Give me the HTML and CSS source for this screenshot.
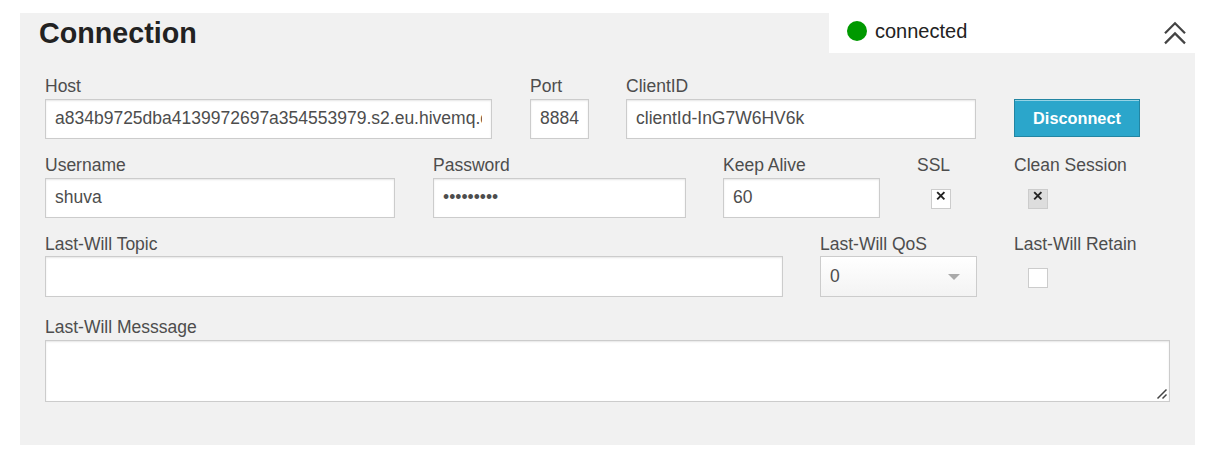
FILE: index.html
```html
<!DOCTYPE html>
<html lang="en">
<head>
<meta charset="utf-8">
<title>Connection</title>
<link rel="stylesheet" href="styles.css">
</head>
<body>
<section class="panel">
  <header class="header">
    <h3 class="title">Connection</h3>
    <div class="status">
      <span class="dot"></span>
      <span class="state">connected</span>
      <svg class="collapse" width="24" height="26" viewBox="0 0 24 26"><path d="M2 13.200 12 3.200l10 10M2 23.400 12 13.400l10 10"/></svg>
    </div>
  </header>
  <form class="form">
    <div class="row row-server">
      <div class="field"><label class="label">Host</label><div class="input"><span class="value">a834b9725dba4139972697a354553979.s2.eu.hivemq.cloud</span></div></div>
      <div class="field"><label class="label">Port</label><div class="input"><span class="value">8884</span></div></div>
      <div class="field"><label class="label">ClientID</label><div class="input"><span class="value">clientId-InG7W6HV6k</span></div></div>
      <button class="button" type="button">Disconnect</button>
    </div>
    <div class="row row-login">
      <div class="field"><label class="label">Username</label><div class="input"><span class="value">shuva</span></div></div>
      <div class="field"><label class="label">Password</label><div class="input"><span class="value">•••••••••</span></div></div>
      <div class="field"><label class="label">Keep Alive</label><div class="input"><span class="value">60</span></div></div>
      <div class="field"><label class="label">SSL</label><span class="check"><svg class="cross" width="10" height="10" viewBox="0 0 10 10"><path d="M1.200 1.200l7.200 7.200M8.400 1.200 1.200 8.400"/></svg></span></div>
      <div class="field"><label class="label">Clean Session</label><span class="check check-on"><svg class="cross" width="10" height="10" viewBox="0 0 10 10"><path d="M1.200 1.200l7.200 7.200M8.400 1.200 1.200 8.400"/></svg></span></div>
    </div>
    <div class="row row-will">
      <div class="field"><label class="label">Last-Will Topic</label><div class="input"></div></div>
      <div class="field"><label class="label">Last-Will QoS</label><div class="input select"><span class="value">0</span><span class="arrow"></span></div></div>
      <div class="field"><label class="label">Last-Will Retain</label><span class="check"></span></div>
    </div>
    <div class="field message">
      <label class="label">Last-Will Messsage</label>
      <div class="textarea"><svg class="grip" width="12" height="12" viewBox="0 0 12 12"><path d="M1.500 10.500 10.500 1.500M6.500 10.500l4-4"/></svg></div>
    </div>
  </form>
</section>
</body>
</html>
```
FILE: styles.css
```css
* { box-sizing: border-box; }
body {
  margin: 0;
  padding: 13px 15px 19px 20px;
  background: #fff;
  color: #4d4d4d;
  font: 17.5px/20px "Liberation Sans", Arial, sans-serif;
}
.panel { height: 432px; background: #f1f1f1; }
.header { display: flex; justify-content: space-between; height: 40px; }
.title { margin: 0; padding-left: 19px; color: #222; font-size: 28.700px; line-height: 40px; }
.status {
  display: flex;
  align-items: center;
  width: 366px;
  padding: 0 8px 4px 18px;
  background: #fff;
  color: #222;
  font-size: 20px;
}
.dot { width: 20px; height: 20px; margin-right: 8px; border-radius: 50%; background: #090; }
.collapse { margin: 4px 0 0 auto; fill: none; stroke: #444; stroke-width: 2.200; }
.form { padding: 23px 25px 0; }
.row { display: grid; height: 79px; }
.row-server { grid-template-columns: 485px 96px 388px 126px; }
.row-login { grid-template-columns: 388px 290px 194px 97px 126px; }
.row-will { grid-template-columns: 775px 194px 130px; height: 83px; }
.row .input { margin-right: 37px; }
.row-server .field:nth-child(odd) .input,
.row-login .field:first-child .input { margin-right: 38px; }
.label { display: block; height: 23px; white-space: nowrap; }
.input {
  display: flex;
  height: 40px;
  padding: 8px 9px 10px;
  border: 1px solid #ccc;
  background: #fff;
  box-shadow: inset 0 1px 2px rgba(0, 0, 0, .1);
}
.value { flex: 1; overflow: hidden; white-space: nowrap; }
.row-will .label { height: 22px; }
.row-will .input { height: 41px; padding-top: 9px; }
.select { background: linear-gradient(#fff, #f3f3f3); box-shadow: none; }
.arrow {
  margin: 8px 7px 0 0;
  width: 12px;
  height: 6px;
  background: #aaa;
  clip-path: polygon(0 0, 100% 0, 50% 100%);
}
.button {
  height: 38px;
  margin-top: 23px;
  padding: 1px 0 0;
  border: 1px solid #2285a2;
  background: #2ba6cb;
  box-shadow: inset 0 1px 0 rgba(255, 255, 255, .5);
  color: #fff;
  font: bold 16.300px "Liberation Sans", Arial, sans-serif;
}
.check {
  display: flex;
  justify-content: center;
  width: 20px;
  height: 20px;
  margin: 11px 0 0 14px;
  padding-top: 1px;
  border: 1px solid #ccc;
  background: #fff;
}
.row-will .check { margin-top: 12px; }
.check-on { background: #ddd; }
.cross { fill: none; stroke: #222; stroke-width: 1.9; }
.textarea {
  display: flex;
  align-items: flex-end;
  justify-content: flex-end;
  height: 62px;
  padding: 1px;
  border: 1px solid #ccc;
  background: #fff;
  box-shadow: inset 0 1px 2px rgba(0, 0, 0, .1);
}
.grip { fill: none; stroke: #444; stroke-width: 1.5; }
```
